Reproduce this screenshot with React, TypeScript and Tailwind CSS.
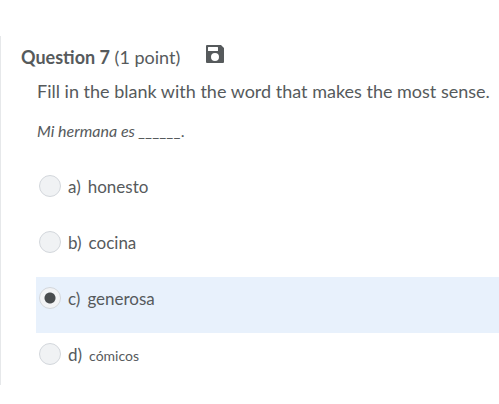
import React, { useState } from "react";

const OPTIONS = [
     { id: "a", text: "honesto", small: false },
     { id: "b", text: "cocina", small: false },
     { id: "c", text: "generosa", small: false },
     { id: "d", text: "cómicos", small: true },
];

function SavedIcon() {
     return (
          <svg viewBox="0 0 18 18" className="h-[18px] w-[18px]" role="img" aria-label="Saved">
               <path
                    fill="#565a5c"
                    fillRule="evenodd"
                    d="M1 0h14L18 3V17a1 1 0 0 1-1 1H1a1 1 0 0 1-1-1V1a1 1 0 0 1 1-1zM2.5 2a.5.5 0 0 0-.5.5v3a.5.5 0 0 0 .5.5h9a.5.5 0 0 0 .5-.5v-3a.5.5 0 0 0-.5-.5zM9 8a4 4 0 1 0 0 8 4 4 0 0 0 0-8z"
               />
          </svg>
     );
}

export default function App() {
     const [answer, setAnswer] = useState("c");

     return (
          <div className="bg-white pt-9 pb-5 font-['Lato',sans-serif] text-[17px] leading-6 text-[#565a5c]">
               <main className="border-l border-[#e6e8ea] pt-[9px]">
                    {/* QUESTION HEADER */}
                    <header className="flex items-start gap-[26px] pl-5 text-lg leading-6">
                         <h2>
                              <span className="font-bold">Question 7</span> (1 point)
                         </h2>
                         <SavedIcon />
                    </header>

                    {/* PROMPT */}
                    <div className="pl-9">
                         <p className="pt-2.5 text-lg leading-6">Fill in the blank with the word that makes the most sense.</p>
                         <p className="pt-4 text-base leading-6 italic">Mi hermana es ______.</p>
                    </div>

                    {/* ANSWERS */}
                    <fieldset className="mt-[22px] pl-[35px]" aria-label="Answer">
                         {OPTIONS.map((option) => (
                              <label
                                   key={option.id}
                                   className="flex h-14 cursor-pointer items-start gap-[7px] pt-2.5 pl-[3px] last:h-13 has-checked:bg-[#e8f1fc]"
                              >
                                   <input
                                        type="radio"
                                        name="answer"
                                        value={option.id}
                                        checked={answer === option.id}
                                        onChange={() => setAnswer(option.id)}
                                        className="h-[22px] w-[22px] shrink-0 appearance-none rounded-full border border-[#d3d7dc] bg-[#f0f2f4] checked:bg-[radial-gradient(circle,#494c4e_5px,#f2f3f5_6px)]"
                                   />
                                   <span className="flex items-baseline gap-[7px]">
                                        <span>{option.id})</span>
                                        <span className={option.small ? "text-sm" : ""}>{option.text}</span>
                                   </span>
                              </label>
                         ))}
                    </fieldset>
               </main>
          </div>
     );
}
